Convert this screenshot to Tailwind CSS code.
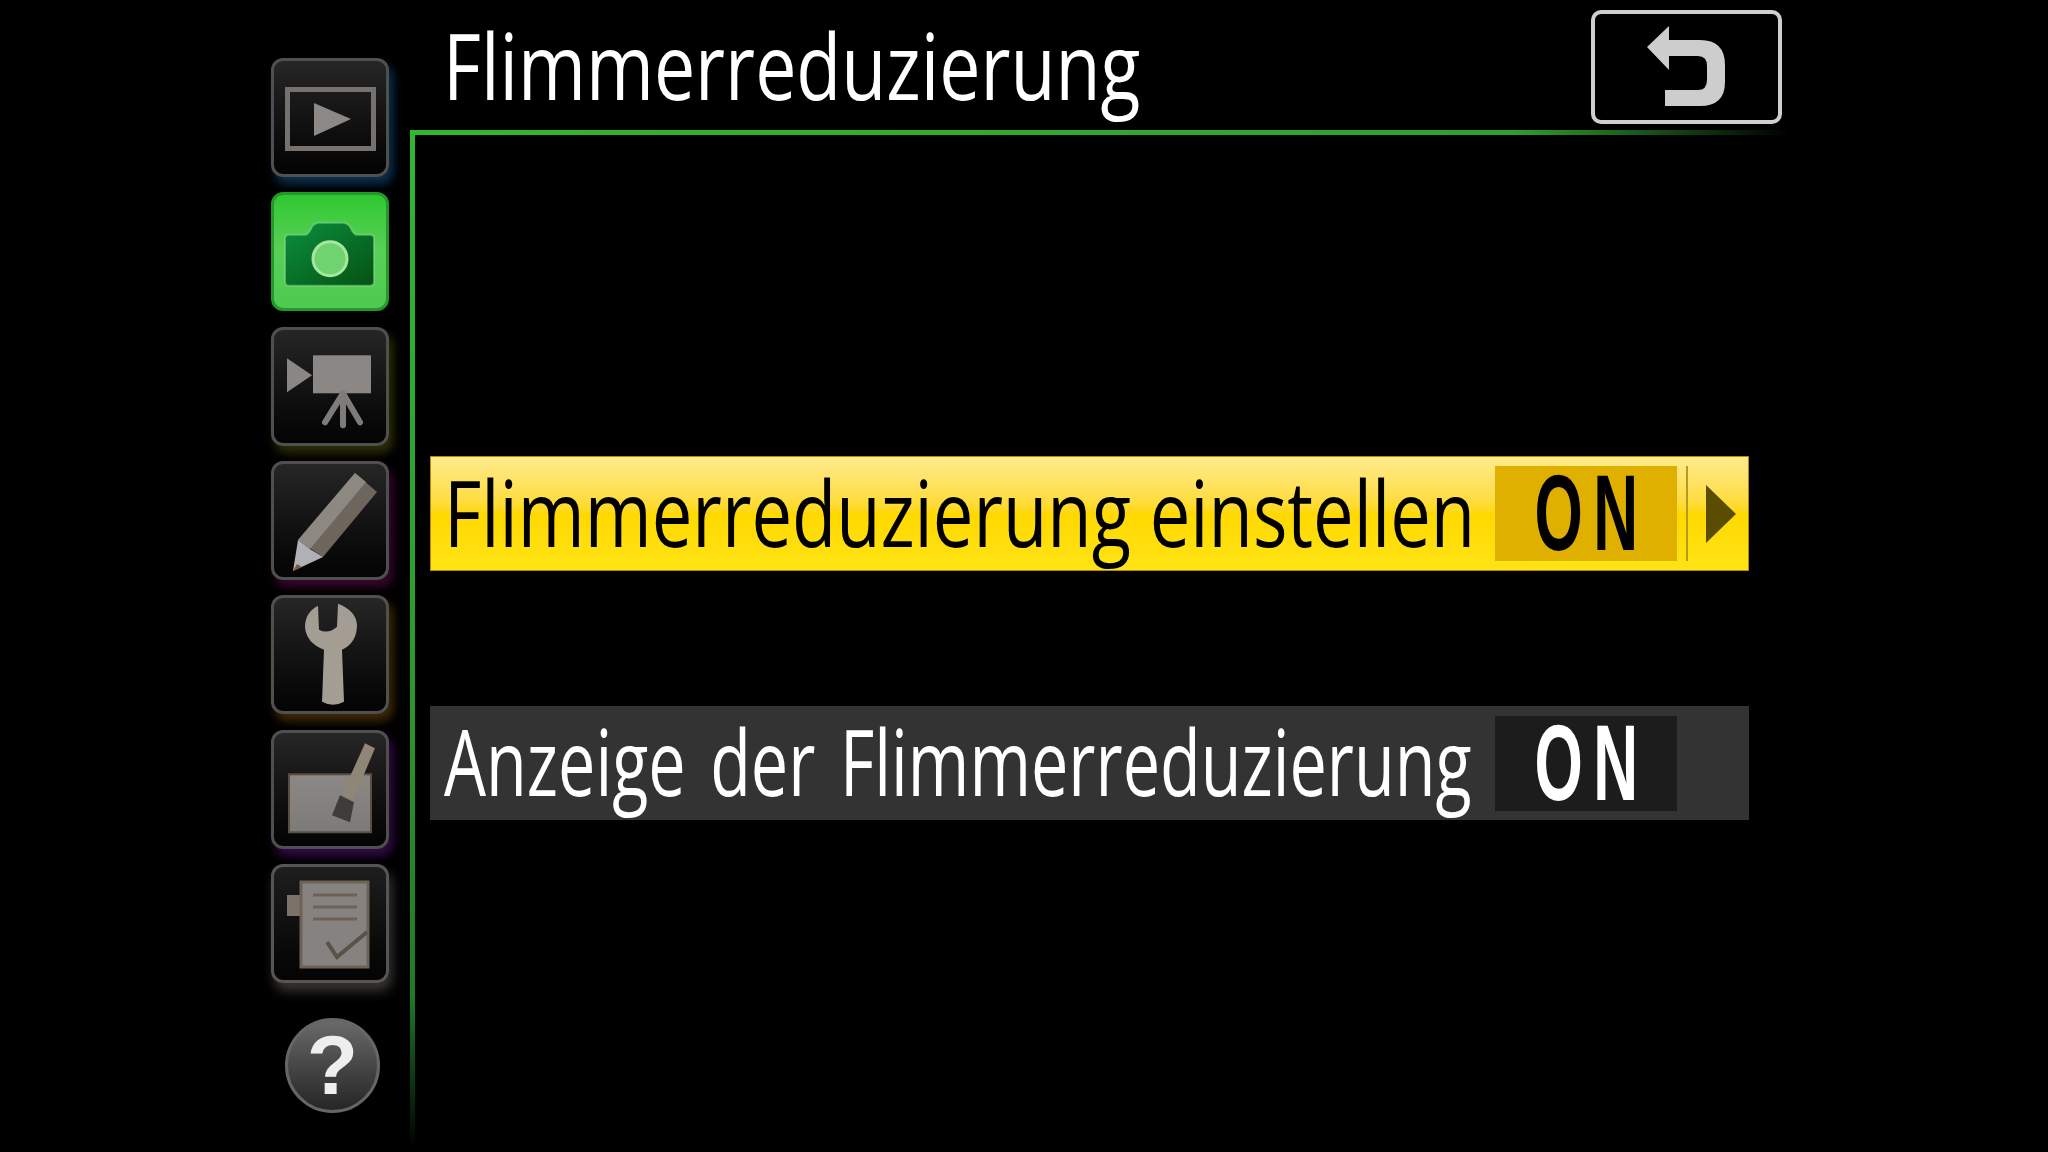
<!DOCTYPE html>
<html lang="de">
<head>
<meta charset="UTF-8">
<title>Flimmerreduzierung</title>
<script src="https://cdn.jsdelivr.net/npm/@tailwindcss/browser@4"></script>
</head>
<body>
<div class="w-[2048px] h-[1152px] overflow-hidden bg-black flex blur-[0.6px] font-['Open_Sans',sans-serif]">
  <!-- icon column, svg viewBoxes use page coordinates -->
  <aside class="w-[410px] shrink-0 pl-[271px] pt-[58px] flex flex-col gap-[15.33px]">
    <div class="w-[118px] h-[119px] shrink-0 rounded-[12px] border-[3px] border-[#4f4f4f] bg-gradient-to-b from-[#262626] to-[#040404] shadow-[4px_7px_10px_0_#0c3050]">
      <svg width="112" height="113" viewBox="274 61 112 113"><rect x="287.5" y="89.5" width="86" height="59" fill="none" stroke="#76716c" stroke-width="5"/><path d="M314 103 L351 119 L314 136Z" fill="#8c8885"/></svg>
    </div>
    <div class="w-[118px] h-[119px] shrink-0 rounded-[12px] border-[3px] border-[#22992a] bg-gradient-to-b from-[#2fc82f] via-[#58d058] to-[#4fc94f]">
      <svg width="112" height="113" viewBox="274 195.3 112 113">
        <defs><linearGradient id="cam" x1="0" y1="0" x2="1" y2="1"><stop offset="0" stop-color="#0b8f40"/><stop offset="1" stop-color="#055212"/></linearGradient></defs>
        <path d="M289 235 H305 Q308 235 311 229 Q313 224 318 223 H344 Q349 224 351 229 Q354 235 357 235 H370 Q374 235 374 239 V282 Q374 286 370 286 H289 Q285 286 285 282 V239 Q285 235 289 235Z" fill="url(#cam)" stroke="#8fe08f" stroke-opacity="0.5" stroke-width="2"/>
        <circle cx="330" cy="259" r="17" fill="#6fd36f" stroke="#a8e6a0" stroke-width="3"/>
      </svg>
    </div>
    <div class="w-[118px] h-[119px] shrink-0 rounded-[12px] border-[3px] border-[#4f4f4f] bg-gradient-to-b from-[#262626] to-[#040404] shadow-[4px_7px_10px_0_#2e2e08]">
      <svg width="112" height="113" viewBox="274 329.7 112 113"><path d="M287 358 L312 375 L287 392Z" fill="#8a8684"/><rect x="313" y="355" width="58" height="38" fill="#8b8785"/><path d="M343 393 L325 422 M343 393 V425 M343 393 L360 422" stroke="#7f7b78" stroke-width="6" fill="none" stroke-linecap="round"/></svg>
    </div>
    <div class="w-[118px] h-[119px] shrink-0 rounded-[12px] border-[3px] border-[#4f4f4f] bg-gradient-to-b from-[#262626] to-[#040404] shadow-[4px_7px_10px_0_#38062e]">
      <svg width="112" height="113" viewBox="274 464 112 113"><path d="M355 473 L377 492 L323 557 L298 540Z" fill="#6e665c"/><path d="M355 473 L366 482 L310 549 L298 540Z" fill="#8d8882"/><path d="M298 540 L310 549 L323 557 L293 571Z" fill="#b0b0b6"/><path d="M297 564 L302 567 L293 571Z" fill="#7a5a3a"/></svg>
    </div>
    <div class="w-[118px] h-[119px] shrink-0 rounded-[12px] border-[3px] border-[#4f4f4f] bg-gradient-to-b from-[#262626] to-[#040404] shadow-[4px_7px_10px_0_#3e2a06]">
      <svg width="112" height="113" viewBox="274 598.3 112 113"><path d="M318 606 Q305 613 305 627 Q306 643 324 650 L322 702 Q333 708 344 702 L342 650 Q357 643 357 625 Q356 611 338 604 L337 627 Q328 635 319 630Z" fill="#a39d94"/></svg>
    </div>
    <div class="w-[118px] h-[119px] shrink-0 rounded-[12px] border-[3px] border-[#4f4f4f] bg-gradient-to-b from-[#262626] to-[#040404] shadow-[4px_7px_10px_0_#320a46]">
      <svg width="112" height="113" viewBox="274 732.7 112 113">
        <defs><linearGradient id="canvas" x1="0" y1="0" x2="0" y2="1"><stop offset="0" stop-color="#8c8886"/><stop offset="1" stop-color="#7c7a78"/></linearGradient></defs>
        <rect x="289" y="774" width="82" height="58" fill="url(#canvas)" stroke="#5a4d42" stroke-width="2"/>
        <path d="M365 743 L375 748 L353 800 L342 794Z" fill="#8f8678"/>
        <path d="M340 795 L354 802 L350 822 L332 815Z" fill="#3f3b38"/>
      </svg>
    </div>
    <div class="w-[118px] h-[119px] shrink-0 rounded-[12px] border-[3px] border-[#555] bg-gradient-to-b from-[#1e1e1e] to-[#040404] shadow-[3px_8px_12px_0_#3a3632]">
      <svg width="112" height="113" viewBox="274 867 112 113">
        <rect x="287" y="895" width="14" height="21" fill="#7c7268"/>
        <rect x="301" y="882" width="67" height="85" fill="#86827f" stroke="#6e6256" stroke-width="3"/>
        <path d="M313 895 H357 M313 907 H357 M313 919 H357" stroke="#6e6256" stroke-width="3"/>
        <path d="M327 942 L337 957 L367 932" stroke="#5a5148" stroke-width="4" fill="none"/>
      </svg>
    </div>
    <div class="w-[95px] h-[95px] shrink-0 ml-[14px] mt-[19.67px] rounded-full border-[3px] border-[#666] bg-gradient-to-b from-[#6a6a6a] to-[#262626] flex items-center justify-center text-[#eee] text-[84px] font-bold leading-none font-['Liberation_Sans',sans-serif]">?</div>
  </aside>

  <main class="flex-1 flex flex-col">
    <header class="h-[130px] shrink-0 flex pl-[33px]">
      <h1 class="w-[1148px] h-[130px] pt-[2px] text-white text-[92px] leading-[125px]"><span class="inline-block origin-left scale-x-[0.798] whitespace-nowrap">Flimmerreduzierung</span></h1>
      <div class="w-[191px] h-[114px] mt-[10px] rounded-[10px] border-[4px] border-[#cfcfcf]">
        <svg width="183" height="106" viewBox="1595 14 183 106"><path d="M1669 26 V40 H1700 Q1725 40 1725 65 V82 Q1725 106 1700 106 H1665 V90 H1698 Q1707 90 1707 80 V66 Q1707 56 1698 56 H1669 V70 L1647 47Z" fill="#cdcdcd"/></svg>
      </div>
    </header>
    <div class="w-[1380px] h-[5px] shrink-0 bg-[linear-gradient(to_right,#30b830_0%,#2f9f2f_80%,transparent_100%)]"></div>
    <div class="flex-1 flex">
      <div class="w-[5px] h-[1012px] shrink-0 bg-[linear-gradient(to_bottom,#30b830_0%,#2c9c2c_50%,#1f7a2a_85%,transparent_100%)]"></div>
      <section class="w-[1319px] ml-[15px] pt-[321px]">
        <div class="h-[115px] pl-[13px] flex items-center bg-gradient-to-b from-[#ffeb8a] via-[#ffd800] to-[#ffe414] border border-[#b58a00]">
          <span class="w-[1051px] shrink-0 pb-[4px] text-black text-[92px] leading-none"><span class="inline-block origin-left scale-x-[0.786] whitespace-nowrap">Flimmerreduzierung einstellen</span></span>
          <span class="w-[182px] h-[95px] shrink-0 bg-[#e0b000] flex items-center justify-center text-black text-[107px] font-bold leading-none font-['Liberation_Sans',sans-serif]"><span class="inline-block scale-x-[0.58] tracking-[18px] pl-[18px]">ON</span></span>
          <span class="ml-[9px] w-[2px] h-[95px] shrink-0 bg-[#b89a20]"></span>
          <svg class="ml-[18px]" width="30" height="58" viewBox="0 0 30 58"><path d="M0 0 L30 29 L0 58Z" fill="#5a4c00"/></svg>
        </div>
        <div class="mt-[135px] h-[114px] pl-[14px] flex items-center bg-[#333]">
          <span class="w-[1051px] shrink-0 pb-[4px] text-white text-[92px] leading-none"><span class="inline-block origin-left scale-x-[0.723] [word-spacing:10px] whitespace-nowrap">Anzeige der Flimmerreduzierung</span></span>
          <span class="w-[182px] h-[95px] shrink-0 bg-[#1c1c1c] flex items-center justify-center text-white text-[107px] font-bold leading-none font-['Liberation_Sans',sans-serif]"><span class="inline-block scale-x-[0.58] tracking-[18px] pl-[18px]">ON</span></span>
        </div>
      </section>
    </div>
  </main>
</div>
</body>
</html>
